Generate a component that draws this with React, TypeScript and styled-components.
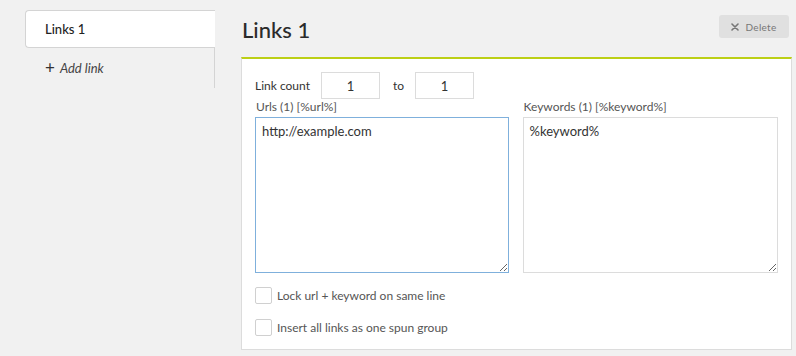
import * as React from 'react'
import styled, {createGlobalStyle} from "styled-components"

const GlobalStyle = createGlobalStyle({
  "html, body": {
    margin: 0,
    padding: 0,
    background: "#f1f1f1",
    fontFamily: "Lato, 'Open Sans', sans-serif",
    color: "#333",
  },
  "*": {boxSizing: "border-box"},
})

const StyledRoot = styled('div')({
  display: "flex",
  flexDirection: "row",
  alignItems: "flex-start",
  padding: "10px 0 0 25px",
  width: "796px",
  height: "356px",
})

const Sidebar = styled('div')({
  display: "flex",
  flexDirection: "column",
  width: "190px",
})

const Tab = styled('div')<{ $active?: boolean }>(({$active}) => ({
  height: "38px",
  display: "flex",
  alignItems: "center",
  paddingLeft: "19px",
  fontSize: "13px",
  fontWeight: 500,
  color: "#222",
  background: $active ? "#fff" : "transparent",
  border: "1px solid #d4d4d4",
  borderRight: "none",
  borderRadius: "4px 0 0 4px",
}))

const AddLink = styled('div')({
  height: "40px",
  display: "flex",
  alignItems: "center",
  gap: "5px",
  paddingLeft: "20px",
  borderRight: "1px solid #d4d4d4",
  fontSize: "13px",
  fontStyle: "italic",
  color: "#444",

  ".plus": {
    fontStyle: "normal",
    fontSize: "17px",
    fontWeight: 400,
    color: "#333",
    marginTop: "-2px",
  }
})

const Main = styled('div')({
  marginLeft: "26px",
  width: "551px",
  display: "flex",
  flexDirection: "column",
})

const Header = styled('div')({
  height: "47px",
  display: "flex",
  flexDirection: "row",
  alignItems: "flex-start",
  justifyContent: "space-between",
})

const Title = styled('h1')({
  margin: "5px 0 0 1px",
  fontSize: "22px",
  fontWeight: 500,
  color: "#2b2b2b",
  lineHeight: "30px",
})

const DeleteButton = styled('button')({
  marginTop: "5px",
  marginRight: "3px",
  width: "70px",
  height: "23px",
  border: "none",
  borderRadius: "3px",
  background: "#e0e0e0",
  color: "#777",
  fontFamily: "inherit",
  fontSize: "10px",
  letterSpacing: "0.3px",
  display: "flex",
  alignItems: "center",
  justifyContent: "center",
  gap: "6px",
  padding: 0,
})

const Panel = styled('div')({
  background: "#fff",
  border: "1px solid #dcdcdc",
  borderTop: "2px solid #bccf16",
  padding: "13px",
  display: "flex",
  flexDirection: "column",
})

const CountRow = styled('div')({
  display: "flex",
  flexDirection: "row",
  alignItems: "center",
  fontSize: "12px",
  color: "#333",
  height: "27px",

  ".to": {
    margin: "0 11px 0 13px",
  }
})

const CountInput = styled('input')({
  width: "59px",
  height: "27px",
  border: "1px solid #dcdcdc",
  textAlign: "center",
  fontFamily: "inherit",
  fontSize: "13px",
  color: "#333",
  outline: "none",
})

const CountLabel = styled('span')({
  width: "66px",
})

const Columns = styled('div')({
  display: "flex",
  flexDirection: "row",
  gap: "14px",
})

const Column = styled('div')<{ $width: number }>(({$width}) => ({
  width: `${$width}px`,
  display: "flex",
  flexDirection: "column",

  label: {
    fontSize: "12px",
    color: "#555",
    height: "18px",
    lineHeight: "16px",
    paddingLeft: "1px",
  }
}))

const TextBox = styled('textarea')<{ $focused?: boolean }>(({$focused}) => ({
  height: "156px",
  width: "100%",
  resize: "both",
  border: $focused ? "1px solid #7fb0dc" : "1px solid #dcdcdc",
  padding: "5px 6px",
  fontFamily: "inherit",
  fontSize: "13px",
  color: "#333",
  outline: "none",
}))

const CheckRow = styled('label')({
  display: "flex",
  flexDirection: "row",
  alignItems: "center",
  gap: "5px",
  fontSize: "12px",
  color: "#555",
  height: "17px",
  marginTop: "14px",

  "& + &": {
    marginTop: "15px",
  }
})

const CheckBox = styled('span')({
  width: "17px",
  height: "17px",
  border: "1px solid #d0d0d0",
  borderRadius: "2px",
  background: "#fff",
})

const XIcon = () => <svg width="8" height="8" viewBox="0 0 8 8">
  <path d="M1 1 L7 7 M7 1 L1 7" stroke="#777" strokeWidth="1.6" strokeLinecap="round"/>
</svg>

export default function App() {
  return <>
    <GlobalStyle/>
    <StyledRoot>
      <Sidebar>
        <Tab $active>Links 1</Tab>
        <AddLink><span className="plus">+</span>Add link</AddLink>
      </Sidebar>
      <Main>
        <Header>
          <Title>Links 1</Title>
          <DeleteButton><XIcon/>Delete</DeleteButton>
        </Header>
        <Panel>
          <CountRow>
            <CountLabel>Link count</CountLabel>
            <CountInput defaultValue="1"/>
            <span className="to">to</span>
            <CountInput defaultValue="1"/>
          </CountRow>
          <Columns>
            <Column $width={254}>
              <label>Urls (1) [%url%]</label>
              <TextBox $focused defaultValue="http://example.com"/>
            </Column>
            <Column $width={256}>
              <label>Keywords (1) [%keyword%]</label>
              <TextBox defaultValue="%keyword%"/>
            </Column>
          </Columns>
          <CheckRow><CheckBox/>Lock url + keyword on same line</CheckRow>
          <CheckRow><CheckBox/>Insert all links as one spun group</CheckRow>
        </Panel>
      </Main>
    </StyledRoot>
  </>
}
